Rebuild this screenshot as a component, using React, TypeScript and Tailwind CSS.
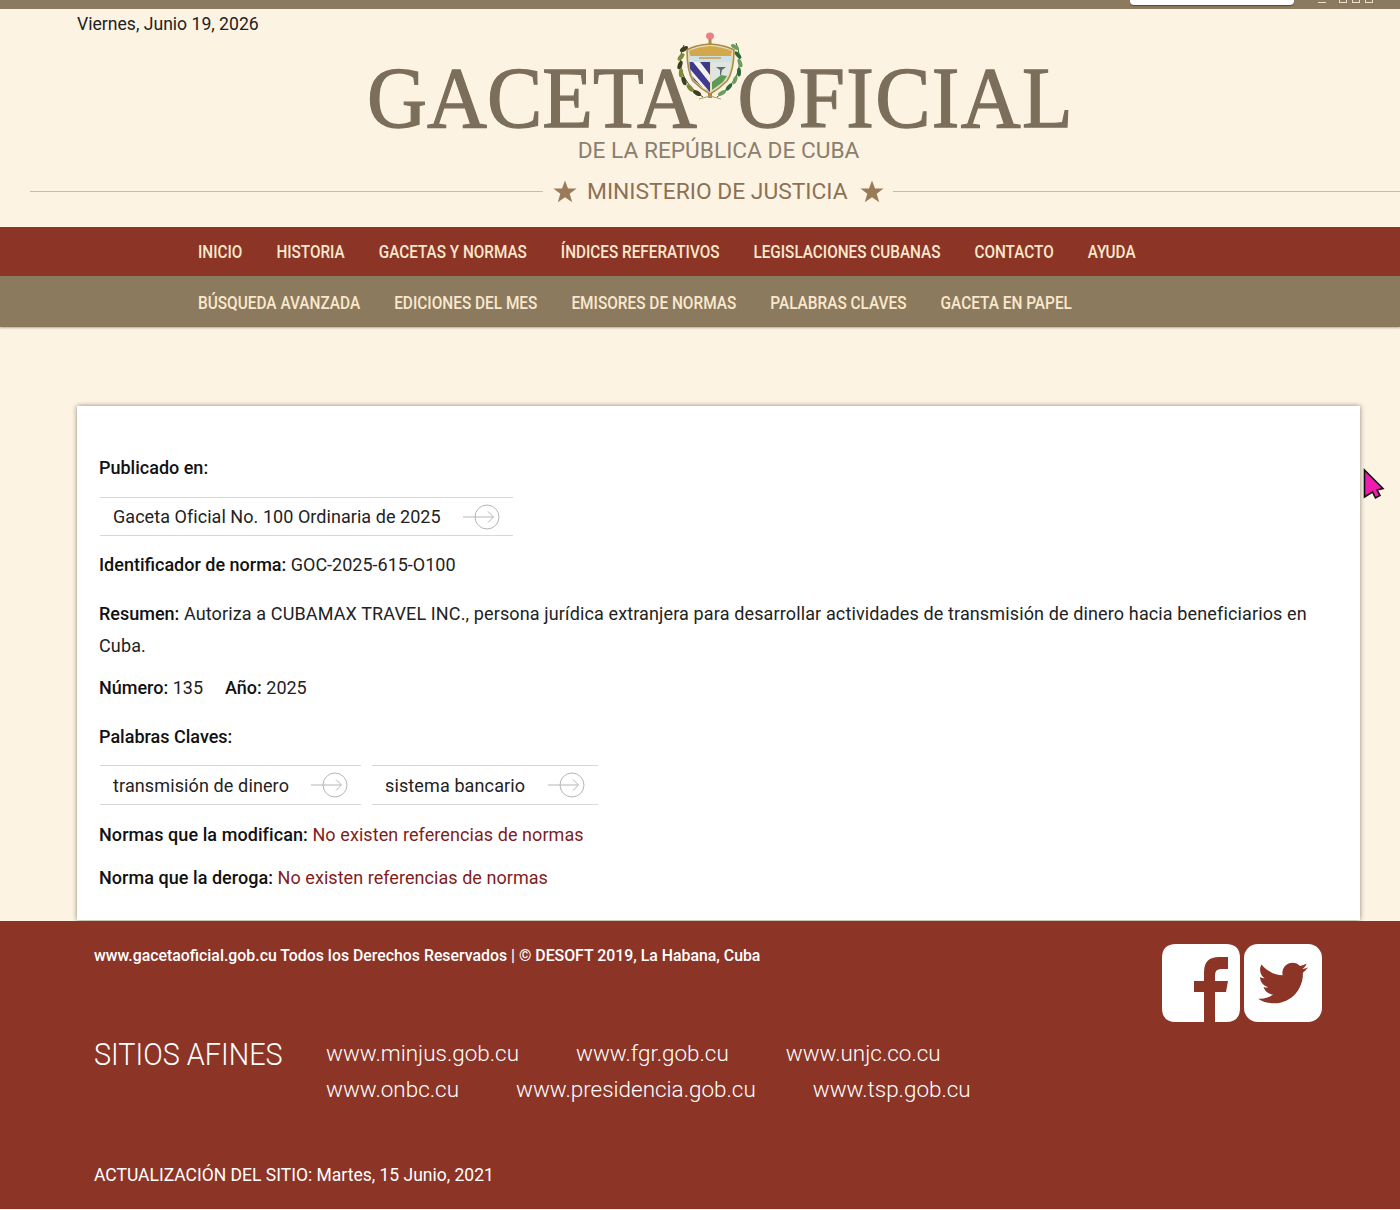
import { FaTwitter } from 'react-icons/fa';

const mainMenu = ['INICIO', 'HISTORIA', 'GACETAS Y NORMAS', 'ÍNDICES REFERATIVOS', 'LEGISLACIONES CUBANAS', 'CONTACTO', 'AYUDA'];
const subMenu = ['BÚSQUEDA AVANZADA', 'EDICIONES DEL MES', 'EMISORES DE NORMAS', 'PALABRAS CLAVES', 'GACETA EN PAPEL'];

// hojas de las ramas del escudo: x, y, giro
const leftLeaves = [[9, 18, -30], [6, 26, -50], [5, 34, -70], [6, 42, -90], [9, 50, -110], [15, 57, -130], [22, 62, -150]];
const rightLeaves = [[60, 16, 30], [63, 24, 50], [65, 32, 70], [64, 41, 90], [60, 49, 110], [54, 56, 130], [47, 62, 150]];

function ArrowCircle() {
  return (
    <svg width="38" height="26" viewBox="0 0 38 26" fill="none" stroke="#b5b5b5" strokeWidth="1" className="shrink-0">
      <circle cx="25" cy="13" r="12" />
      <path d="M1 13H31M26 7.5L31.5 13L26 18.5" />
    </svg>
  );
}

function LinkBox({ text, className }: { text: string; className: string }) {
  return (
    <div className={`flex items-center justify-between pl-[13px] pr-[13px] border-y border-[#d8d8d8] text-[18px] text-[#222] ${className}`}>
      <span>{text}</span>
      <ArrowCircle />
    </div>
  );
}

function Star() {
  return (
    <svg width="24" height="23" viewBox="0 0 24 23" className="shrink-0">
      <path d="M12 0.5L15 8.6H23.6L16.7 13.8L19.2 22.3L12 17.3L4.8 22.3L7.3 13.8L0.4 8.6H9Z" fill="#9a7b58" />
    </svg>
  );
}

function Shield() {
  return (
    <svg width="70" height="74" viewBox="0 0 70 74" className="absolute left-[308px] top-0">
      {/* gorro */}
      <ellipse cx="35" cy="5" rx="4" ry="3.5" fill="#e8808a" />
      <rect x="33.5" y="8" width="3" height="7" fill="#b08a3c" />
      {/* ramas */}
      <path d="M9 14C2 30 4 50 28 66" fill="none" stroke="#4c4a2c" strokeWidth="1" />
      <path d="M61 12C68 30 66 50 42 66" fill="none" stroke="#2f6a35" strokeWidth="1" />
      {leftLeaves.map(([x, y, r], i) => (
        <ellipse key={`l-${i}`} cx={x} cy={y} rx="4.5" ry="2.2" transform={`rotate(${r} ${x} ${y})`} fill={i % 2 ? '#7d8a3a' : '#3d4020'} />
      ))}
      {rightLeaves.map(([x, y, r], i) => (
        <ellipse key={`r-${i}`} cx={x} cy={y} rx="4.5" ry="2" transform={`rotate(${r} ${x} ${y})`} fill={i % 2 ? '#2a6b35' : '#6f9c5a'} />
      ))}
      {/* escudo */}
      <path d="M12 19Q20 14 35 13Q50 14 59 19Q59 40 52 50Q44 58 35 63Q26 58 18 50Q12 40 12 19Z" fill="#e6dcb8" stroke="#a88c46" strokeWidth="1.6" />
      <path d="M14 20Q22 16 35 15Q48 16 57 20L56 25H15Z" fill="#d3a84c" />
      <path d="M14.5 25H56V31H14.5Z" fill="#cfe0e6" />
      <path d="M24 27H46" stroke="#c9a24a" strokeWidth="1.6" />
      <path d="M14.5 31H35V61Q26 56 19 49Q14.5 42 14.5 31Z" fill="#3f3a8a" />
      <path d="M18 31H25L35 44V52ZM15 38L34 60L28 57L17 45Z" fill="#f4f2ee" />
      <path d="M36 31H56Q55.5 41 50 48L36 60Z" fill="#dfe6e2" />
      <path d="M37 51L46 44L52 45L48 51L37 59Z" fill="#5d9a54" />
      <path d="M41 36H51L47 39L46 44H45L45 39Z" fill="#5f6c74" />
      <rect x="33" y="62" width="4" height="5" fill="#b8843c" />
      <path d="M24 68L35 65L46 68" fill="none" stroke="#a89a6a" strokeWidth="1" />
    </svg>
  );
}

function Cursor() {
  return (
    <svg width="22" height="32" viewBox="0 0 22 32" className="absolute left-[1363px] top-[468px]">
      <path d="M1.5 2L20 20.5L14 22L17 27.5L12.5 30L9.5 24L1.5 29Z" fill="#f01bb0" stroke="#111" strokeWidth="1.6" />
    </svg>
  );
}

export default function App() {
  return (
    <div className="relative w-[1400px] h-[1210px] overflow-hidden bg-[#fdf3e3] font-['Roboto',sans-serif] flex flex-col">
      {/* barra superior */}
      <div className="h-[9px] shrink-0 bg-[#8b7a5e] flex justify-end items-start pr-[27px] gap-[24px]">
        <div className="w-[164px] h-[5px] bg-white rounded-b-sm shadow-[0_1px_1px_rgba(0,0,0,0.4)]" />
        <div className="flex items-center gap-[5px] h-[3px] overflow-hidden">
          <div className="w-[8px] h-[3px] border-b border-[#e8dfcf] mr-[8px]" />
          <div className="w-[8px] h-[3px] border border-t-0 border-[#e8dfcf]" />
          <div className="w-[8px] h-[3px] border border-t-0 border-[#e8dfcf]" />
          <div className="w-[8px] h-[3px] border border-t-0 border-[#e8dfcf]" />
        </div>
      </div>

      {/* cabecera */}
      <header className="h-[218px] shrink-0 flex flex-col">
        <div className="pl-[77px] pt-[4px] h-[22px] text-[17.6px] leading-[22px] text-[#222]">Viernes, Junio 19, 2026</div>
        <div className="relative w-[707px] ml-[367px] h-[133px]">
          <div className="absolute left-0 top-[17px] font-['Liberation_Serif',serif] text-[83px] leading-[100px] text-[#7b6e5a] [-webkit-text-stroke:1.2px_#7b6e5a] whitespace-nowrap flex justify-between w-full">
            <span className="scale-y-[1.05]">GACETA</span>
            <span className="scale-y-[1.05] tracking-[1.3px]">OFICIAL</span>
          </div>
          <Shield />
          <div className="absolute left-0 right-[4px] top-[106px] text-center text-[22.7px] leading-[28px] text-[#8b7f6e]">DE LA REPÚBLICA DE CUBA</div>
        </div>
        <div className="flex items-center h-[30px] pl-[30px] mt-[12px]">
          <div className="h-px w-[513px] bg-[#d6b992]" />
          <div className="mx-[10px]"><Star /></div>
          <div className="text-[22.8px] leading-[30px] pt-[1px] text-[#8c7155] whitespace-nowrap">MINISTERIO DE JUSTICIA</div>
          <div className="ml-[12px] mr-[9px]"><Star /></div>
          <div className="h-px flex-1 bg-[#d6b992]" />
        </div>
      </header>

      {/* menus */}
      <nav className="h-[49px] shrink-0 bg-[#8c3527] flex items-center pl-[198px] pt-[2px] gap-[34px] text-[15.3px] font-medium text-[#fbe8cc]">
        {mainMenu.map((m) => <span key={m} className="whitespace-nowrap scale-y-[1.18]">{m}</span>)}
      </nav>
      <nav className="h-[51px] shrink-0 bg-[#8b7a5e] flex items-center pl-[198px] pt-[4px] gap-[34px] text-[15.4px] font-medium text-[#fbe8cc] shadow-[0_1px_2px_rgba(0,0,0,0.3)]">
        {subMenu.map((m) => <span key={m} className="whitespace-nowrap scale-y-[1.17]">{m}</span>)}
      </nav>

      {/* ficha de la norma */}
      <main className="ml-[77px] mt-[79px] w-[1283px] h-[514px] shrink-0 bg-white shadow-[0_0_5px_rgba(0,0,0,0.45)] pl-[22px] pr-[22px] pt-[50px] text-[18px] leading-[23px] text-[#222]">
        <p className="font-medium text-[#111]">Publicado en:</p>
        <LinkBox text="Gaceta Oficial No. 100 Ordinaria de 2025" className="w-[413px] h-[39px] ml-[1px] mt-[18px] tracking-[0.05px]" />
        <p className="mt-[17px]"><b className="font-medium text-[#111]">Identificador de norma:</b> GOC-2025-615-O100</p>
        <p className="mt-[22px] leading-[32px] tracking-[0.13px]"><b className="font-medium tracking-normal text-[#111]">Resumen:</b> Autoriza a CUBAMAX TRAVEL INC., persona jurídica extranjera para desarrollar actividades de transmisión de dinero hacia beneficiarios en Cuba.</p>
        <p className="mt-[14px]">
          <b className="font-medium text-[#111]">Número:</b> 135
          <b className="font-medium text-[#111] ml-[22px]">Año:</b> 2025
        </p>
        <p className="mt-[26px] font-medium text-[#111]">Palabras Claves:</p>
        <div className="flex gap-[11px] mt-[17px] ml-[1px]">
          <LinkBox text="transmisión de dinero" className="w-[261px] h-[40px] tracking-[0.12px]" />
          <LinkBox text="sistema bancario" className="w-[226px] h-[40px] tracking-[0.12px]" />
        </div>
        <p className="mt-[18px] tracking-[0.08px]"><b className="font-medium text-[#111]">Normas que la modifican:</b> <span className="text-[#7f1d1d]">No existen referencias de normas</span></p>
        <p className="mt-[20px] tracking-[0.05px]"><b className="font-medium text-[#111]">Norma que la deroga:</b> <span className="text-[#7f1d1d]">No existen referencias de normas</span></p>
      </main>

      {/* pie */}
      <footer className="mt-[1px] flex-1 bg-[#8c3527] text-white pl-[94px] pr-[78px] pt-[25px] flex flex-col border-b border-[#fdf3e3]">
        <div className="flex justify-between items-start h-[89px]">
          <p className="text-[15.85px] leading-[20px] font-medium">www.gacetaoficial.gob.cu Todos los Derechos Reservados | © DESOFT 2019, La Habana, Cuba</p>
          <div className="flex gap-[4px] -mt-[2px]">
            <svg width="78" height="78" viewBox="0 0 78 78">
              <path fillRule="evenodd" fill="#fff" d="M14 0H64Q78 0 78 14V64Q78 78 64 78H53V48H64L66 37H53V31Q53 25 59 25H66V13H57Q42 13 42 28V37H32V48H42V78H14Q0 78 0 64V14Q0 0 14 0Z" />
            </svg>
            <div className="w-[78px] h-[78px] bg-white rounded-[14px] flex items-center justify-center">
              <FaTwitter className="w-[50px] h-[50px] text-[#8c3527]" />
            </div>
          </div>
        </div>
        <div className="flex items-start">
          <h2 className="text-[28.8px] leading-[40px] font-light w-[232px] -mt-[1px] whitespace-nowrap"><span className="inline-block scale-y-[1.11]">SITIOS AFINES</span></h2>
          <div className="text-[22.45px] leading-[36px] font-light">
            <div className="flex gap-[57px]"><span>www.minjus.gob.cu</span><span>www.fgr.gob.cu</span><span>www.unjc.co.cu</span></div>
            <div className="flex gap-[57px]"><span>www.onbc.cu</span><span>www.presidencia.gob.cu</span><span>www.tsp.gob.cu</span></div>
          </div>
        </div>
        <p className="mt-[57px] text-[17.5px] leading-[22px]">ACTUALIZACIÓN DEL SITIO: Martes, 15 Junio, 2021</p>
      </footer>

      <Cursor />
    </div>
  );
}
